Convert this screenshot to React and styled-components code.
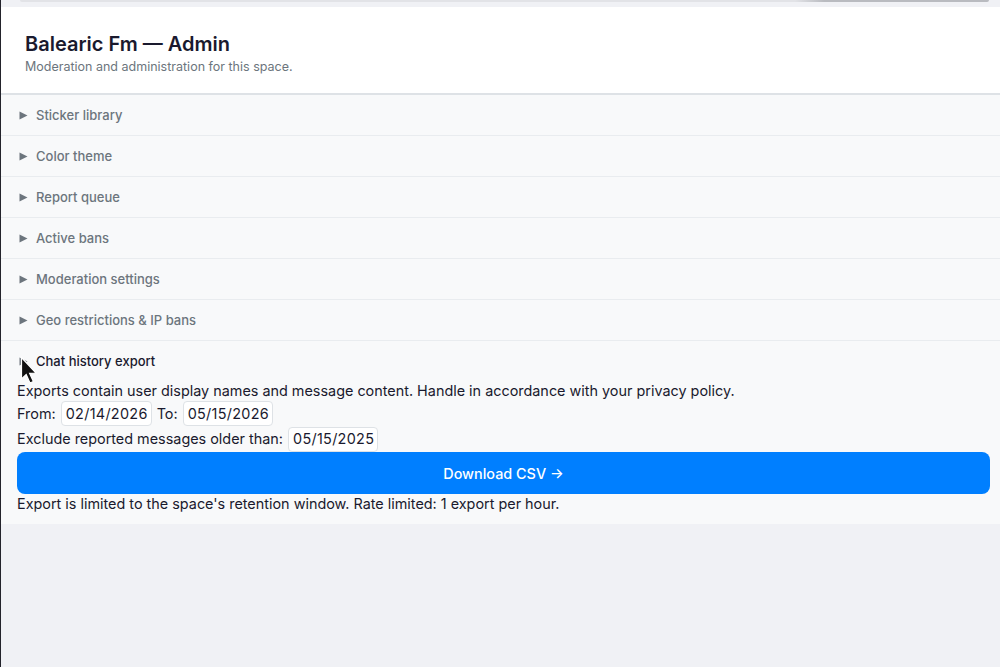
import React from "react";
import styled, { createGlobalStyle } from "styled-components";

const GlobalStyle = createGlobalStyle`
  html, body {
    margin: 0;
    height: 100%;
    background: #f0f1f5;
  }
  body {
    font-family: Inter, "Liberation Sans", sans-serif;
    color: #1a1a2e;
    overflow: hidden;
  }
`;

const Page = styled.div`
  position: relative;
  height: 667px;
  border-left: 1px solid #23232b;
  background: #f0f1f5;
  padding-top: 7px;
  box-sizing: border-box;
`;

const TopShadow = styled.div`
  position: absolute;
  top: 0;
  left: 19px;
  right: 11px;
  height: 2px;
  border-radius: 0 0 8px 8px;
  background: linear-gradient(90deg, #e2e3e7 0%, #e2e3e7 80%, #b9bbc0 83%, #b9bbc0 100%);
`;

const Header = styled.header`
  background: #fff;
  border-bottom: 2px solid #dee2e6;
  height: 88px;
  box-sizing: border-box;
  padding: 25px 24px 0;
`;

const Title = styled.h1`
  margin: 0;
  font-size: 20px;
  line-height: 24px;
  font-weight: 600;
  color: #1a1a2e;
`;

const Subtitle = styled.p`
  margin: 3px 0 0;
  font-size: 12.5px;
  line-height: 16px;
  color: #6c757d;
`;

const Panel = styled.section`
  background: #f8f9fa;
  border-bottom: ${(p) => (p.$open ? "none" : "1px solid #e9ecef")};
`;

const Summary = styled.div`
  display: flex;
  align-items: center;
  height: 40px;
  padding-left: 17px;
  gap: 8px;
  font-size: 13px;
  font-weight: 500;
  color: ${(p) => (p.$open ? "#1a1a2e" : "#6c757d")};
`;

const Arrow = styled.span`
  width: 10px;
  height: 10px;
  display: flex;
  align-items: center;
  justify-content: center;
  color: #6c757d;
`;

const PanelBody = styled.div`
  padding: 0 10px 10px 16px;
  font-size: 14.4px;
  line-height: 20px;
  color: #1a1a2e;
`;

const Line = styled.div`
  display: flex;
  align-items: center;
  gap: 1px;
  height: ${(p) => p.$h}px;
  white-space: pre;
`;

const DateField = styled.span`
  display: inline-flex;
  align-items: center;
  height: 25px;
  padding: 0 3px 0 4px;
  border: 1px solid #dee2e6;
  border-radius: 4px;
  background: #fff;
  box-sizing: border-box;
  font-size: 14.4px;
  letter-spacing: 0.3px;
`;

const DownloadButton = styled.button`
  display: block;
  width: 100%;
  height: 42px;
  border: none;
  border-radius: 8px;
  background: #007fff;
  color: #fff;
  font-family: inherit;
  font-size: 14.4px;
  font-weight: 500;
`;

const Cursor = styled.svg`
  position: absolute;
  left: 19px;
  top: 356px;
`;

const sections = [
  "Sticker library",
  "Color theme",
  "Report queue",
  "Active bans",
  "Moderation settings",
  "Geo restrictions & IP bans",
];

const RightArrow = () => (
  <Arrow>
    <svg width="9" height="9" viewBox="0 0 9 9">
      <path d="M0.5 0.5 L8.5 4.5 L0.5 8.5 Z" fill="currentColor" />
    </svg>
  </Arrow>
);

export default function App() {
  return (
    <Page>
      <GlobalStyle />
      <TopShadow />
      <Header>
        <Title>Balearic Fm — Admin</Title>
        <Subtitle>Moderation and administration for this space.</Subtitle>
      </Header>
      {sections.map((name) => (
        <Panel key={name}>
          <Summary>
            <RightArrow />
            {name}
          </Summary>
        </Panel>
      ))}
      <Panel $open>
        <Summary $open>
          <RightArrow />
          Chat history export
        </Summary>
        <PanelBody>
          <Line $h={20}>
            Exports contain user display names and message content. Handle in accordance with your privacy policy.
          </Line>
          <Line $h={25}>
            From: <DateField>02/14/2026</DateField> To: <DateField>05/15/2026</DateField>
          </Line>
          <Line $h={26}>
            Exclude reported messages older than: <DateField>05/15/2025</DateField>
          </Line>
          <DownloadButton>Download CSV →</DownloadButton>
          <Line $h={20}>
            Export is limited to the space's retention window. Rate limited: 1 export per hour.
          </Line>
        </PanelBody>
      </Panel>
      <Cursor width="18" height="30" viewBox="0 0 18 30">
        <path
          d="M1.5 1.5 L1.5 23 L6.2 18.6 L10 27 L13.4 25.5 L9.6 17.4 L16 17 Z"
          fill="#111"
          stroke="#fff"
          strokeWidth="1.2"
        />
      </Cursor>
    </Page>
  );
}
